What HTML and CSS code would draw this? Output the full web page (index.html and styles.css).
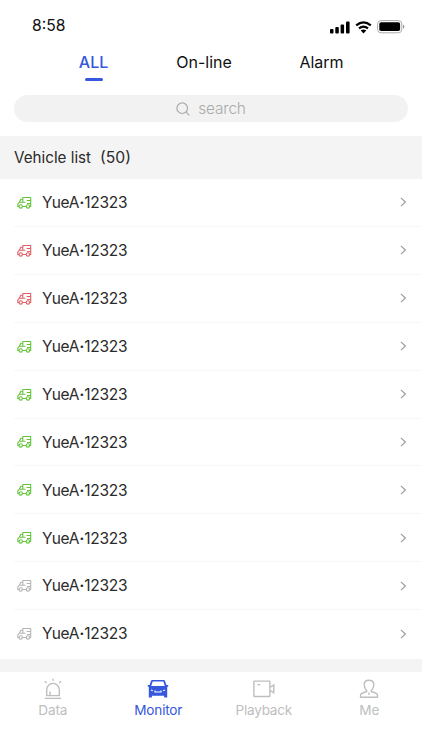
FILE: index.html
```
<!DOCTYPE html>
<html lang="en">
<head>
<meta charset="utf-8">
<title>Monitor</title>
<link rel="stylesheet" href="styles.css">
</head>
<body>
<svg class="defs" aria-hidden="true">
  <symbol id="truck" viewBox="0 0 15 13">
    <g fill="none" stroke="currentColor" stroke-width="1.1" stroke-linecap="round" stroke-linejoin="round">
      <path d="M1.8 10.5H.8V7.8L2.4 6.2 3.8 3.2H5.8M5.8 5.9V1.5H13.7V10.5H12.8M9 10.5H5.6M3.5 6.2H8M10 4.5H13.5M10.5 7.5H13.5"/>
      <circle cx="3.7" cy="10.4" r="1.7"/><circle cx="10.9" cy="10.4" r="1.7"/>
    </g>
  </symbol>
  <symbol id="chevron" viewBox="0 0 8 10"><path d="M1.9 .8L6.4 5 1.9 9.2" fill="none" stroke="currentColor" stroke-width="1.1"/></symbol>
</svg>
<header class="status">
  <span class="time">8:58</span>
  <div class="signals">
    <svg width="20" height="13" viewBox="0 0 20 13"><rect x="0" y="8" width="3.5" height="4.4" rx="1"/><rect x="5.3" y="6" width="3.5" height="6.4" rx="1"/><rect x="10.6" y="3.4" width="3.5" height="9" rx="1"/><rect x="16" y=".4" width="3.6" height="12" rx="1"/></svg>
    <svg width="17" height="13" viewBox="0 0 17 13"><path d="M1.2 4.4Q8.5-1.8 15.8 4.4M4 7.4Q8.5 3.8 13 7.4" fill="none" stroke="#000" stroke-width="2.2"/><path d="M5.7 9.5Q8.5 7.4 11.3 9.5L8.5 12.5Z"/></svg>
    <svg width="28" height="14" viewBox="0 0 28 14"><rect x=".6" y=".6" width="24.2" height="12.2" rx="3.4" fill="none" stroke="#aaa"/><rect x="2.3" y="2.3" width="20.8" height="8.8" rx="1.8"/><path d="M26 4.6Q27.4 5.2 27.4 6.7T26 8.8Z" fill="#999"/></svg>
  </div>
</header>
<nav class="tabs">
  <a class="tab tab-all active">ALL</a>
  <a class="tab tab-online">On-line</a>
  <a class="tab tab-alarm">Alarm</a>
</nav>
<div class="search">
  <svg width="14" height="14" viewBox="0 0 14 14" fill="none" stroke="#aaa" stroke-width="1.2"><circle cx="6.2" cy="6.2" r="5.3"/><path d="M10.2 10.2L13.3 13.3"/></svg>
  <span>search</span>
</div>
<h1 class="heading"><span>Vehicle list</span><span class="count">(50)</span></h1>
<main class="list">
  <div class="row online"><svg class="truck"><use href="#truck"/></svg><span class="plate">YueA<b>·</b>12323</span><svg class="chevron"><use href="#chevron"/></svg></div>
  <div class="row alarm"><svg class="truck"><use href="#truck"/></svg><span class="plate">YueA<b>·</b>12323</span><svg class="chevron"><use href="#chevron"/></svg></div>
  <div class="row alarm"><svg class="truck"><use href="#truck"/></svg><span class="plate">YueA<b>·</b>12323</span><svg class="chevron"><use href="#chevron"/></svg></div>
  <div class="row online"><svg class="truck"><use href="#truck"/></svg><span class="plate">YueA<b>·</b>12323</span><svg class="chevron"><use href="#chevron"/></svg></div>
  <div class="row online"><svg class="truck"><use href="#truck"/></svg><span class="plate">YueA<b>·</b>12323</span><svg class="chevron"><use href="#chevron"/></svg></div>
  <div class="row online"><svg class="truck"><use href="#truck"/></svg><span class="plate">YueA<b>·</b>12323</span><svg class="chevron"><use href="#chevron"/></svg></div>
  <div class="row online"><svg class="truck"><use href="#truck"/></svg><span class="plate">YueA<b>·</b>12323</span><svg class="chevron"><use href="#chevron"/></svg></div>
  <div class="row online"><svg class="truck"><use href="#truck"/></svg><span class="plate">YueA<b>·</b>12323</span><svg class="chevron"><use href="#chevron"/></svg></div>
  <div class="row offline"><svg class="truck"><use href="#truck"/></svg><span class="plate">YueA<b>·</b>12323</span><svg class="chevron"><use href="#chevron"/></svg></div>
  <div class="row offline"><svg class="truck"><use href="#truck"/></svg><span class="plate">YueA<b>·</b>12323</span><svg class="chevron"><use href="#chevron"/></svg></div>
</main>
<nav class="bottom">
  <a class="item">
    <svg width="22" height="22" viewBox="0 0 22 22" fill="none" stroke="currentColor" stroke-width="1.4"><path d="M4.7 17.6V11.7a6.3 6.3 0 0 1 12.6 0V17.6ZM2.8 20.4H19.2M8 17V13.5M11 .8V2.8M3 3.3L4.6 4.9M19 3.3L17.4 4.9"/></svg>
    <span>Data</span>
  </a>
  <a class="item active">
    <svg width="22" height="22" viewBox="0 0 22 22"><path fill="currentColor" fill-rule="evenodd" d="M5.2 2H16.8Q17.7 2 18 2.9L19.4 7.1H21.2V8.8H20.2V19.6H17.1V17.7H4.9V19.6H1.8V8.8H.8V7.1H2.6L4 2.9Q4.3 2 5.2 2ZM5.7 3.5L4.2 8H17.8L16.3 3.5Z"/><path d="M4 12L5.8 12.8M18 12L16.2 12.8M8 12.4V14H14V12.4" fill="none" stroke="#fff" stroke-width="1.2"/></svg>
    <span>Monitor</span>
  </a>
  <a class="item playback">
    <svg width="22" height="22" viewBox="0 0 22 22" fill="none" stroke="currentColor" stroke-width="1.4"><rect x=".9" y="3.1" width="16" height="15.4" rx=".6"/><path d="M4.3 6.6H7.2M17 9.3L20.8 6.9V14.8L17 12.4"/></svg>
    <span>Playback</span>
  </a>
  <a class="item">
    <svg width="22" height="22" viewBox="0 0 22 22" fill="none" stroke="currentColor" stroke-width="1.4" stroke-linejoin="round"><path d="M8.7 12.5Q6.2 10.1 6.2 6.8Q6.2 2.2 11 2.2T15.8 6.8Q15.8 10.1 13.3 12.5V13.5L17.4 15Q19.5 15.8 19.5 17.5V19.3H2.5V17.5Q2.5 15.8 4.6 15L8.7 13.5ZM11 14.6V17"/></svg>
    <span>Me</span>
  </a>
</nav>
</body>
</html>
```
FILE: styles.css
```
* { box-sizing: border-box; }
body {
  margin: 0;
  width: 422px;
  height: 750px;
  overflow: hidden;
  display: flex;
  flex-direction: column;
  background: #fff;
  color: #2b2b2b;
  font-family: Inter, "Liberation Sans", sans-serif;
}
svg { flex: none; display: block; }
.defs { width: 0; height: 0; position: absolute; }
.status {
  height: 46px;
  padding: 4px 17px 0 32px;
  display: flex;
  align-items: center;
  justify-content: space-between;
  color: #111;
}
.time { font-size: 15.7px; }
.signals { display: flex; align-items: center; gap: 5px; padding-top: 4px; }
.tabs {
  height: 49px;
  display: flex;
  justify-content: center;
  gap: 68px;
  color: #111;
}
.tab {
  height: 36px;
  padding-top: 6px;
  font-size: 16px;
  line-height: 20px;
  display: flex;
  flex-direction: column;
  align-items: center;
  white-space: nowrap;
}
.tab-all { width: 29px; }
.tab-online { width: 56px; }
.tab-alarm { width: 43px; }
.tab.active { color: #3558dc; font-weight: 500; }
.tab.active::after {
  content: "";
  width: 18px;
  height: 3px;
  margin-top: 6px;
  border-radius: 2px;
  background: #3558dc;
}
.search {
  flex: none;
  height: 27px;
  margin: 0 14px 14px;
  border-radius: 14px;
  background: #f2f2f2;
  display: flex;
  align-items: center;
  justify-content: center;
  gap: 8px;
  color: #aaa;
  font-size: 15.5px;
  font-weight: 300;
  letter-spacing: -.2px;
}
.heading {
  flex: none;
  height: 43px;
  margin: 0;
  padding: 0 14px;
  background: #f4f4f4;
  display: flex;
  align-items: center;
  gap: 9px;
  font-size: 15.2px;
  font-weight: 400;
}
.count { font-size: 15.7px; }
.list { flex: none; height: 480px; display: flex; flex-direction: column; padding-bottom: 1px; }
.row {
  flex: 1;
  margin-left: 14px;
  padding: 0 15px 0 3px;
  border-bottom: 1px solid #f7f7f7;
  display: flex;
  align-items: center;
}
.row:last-child { border-color: transparent; }
.truck { width: 15px; height: 13px; }
.plate { margin-left: 10px; font-size: 15.5px; letter-spacing: -.25px; flex: 1; padding-top: .5px; }
.chevron { width: 8px; height: 10px; color: #999; }
.online .truck { color: #65c43c; }
.alarm .truck { color: #df6166; }
.offline .truck { color: #b5b5b5; }
.bottom {
  flex: 1;
  border-top: 13px solid #f4f4f4;
  display: flex;
  color: #bebebe;
}
.item {
  flex: 1;
  padding-top: 6px;
  display: flex;
  flex-direction: column;
  align-items: center;
  font-size: 13.6px;
  letter-spacing: -.2px;
  line-height: 18px;
}
.item span { margin-top: 1px; }
.item.active { color: #3558dc; }
.item.playback { letter-spacing: -.25px; }
```
